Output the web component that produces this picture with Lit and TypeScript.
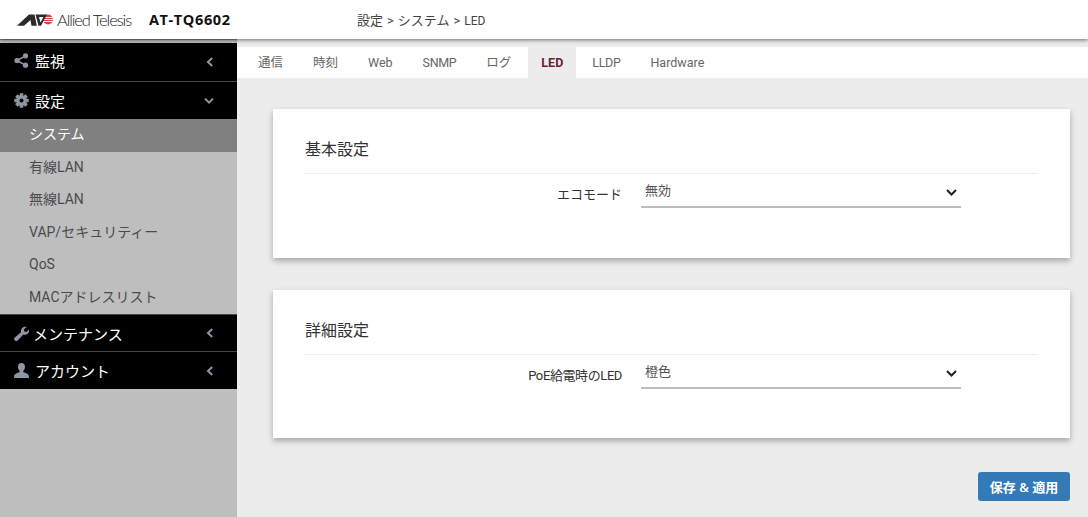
import { LitElement, html, css, svg } from "lit";
import { customElement } from "lit/decorators.js";

const chevLeft = html`<svg class="chev" width="8" height="10" viewBox="0 0 8 10"><path d="M6.200 1 2 5l4.200 4" fill="none" stroke="#8e96a6" stroke-width="2"/></svg>`;
const chevDown = html`<svg class="chev" width="10" height="8" viewBox="0 0 10 8"><path d="M1 1.600 5 5.600l4-4" fill="none" stroke="#8e96a6" stroke-width="2"/></svg>`;
const share = svg`<circle cx="3" cy="7.500" r="2.600"/><circle cx="11.500" cy="2.800" r="2.600"/><circle cx="11.500" cy="12.200" r="2.600"/><path d="M3 7.500 11.500 2.800M3 7.500l8.500 4.700" stroke="#8e96a6" stroke-width="1.500"/>`;
const gearTeeth = [0, 45, 90, 135].map(a => svg`<rect x="5.700" y="0.300" width="3.600" height="14.400" rx=".4" transform="rotate(${a} 7.500 7.500)"/>`);
const gear = svg`${gearTeeth}<circle cx="7.500" cy="7.500" r="5.200"/><circle cx="7.500" cy="7.500" r="2" fill="#000"/>`;
const wrench = svg`<path d="M.8 14.200c-1-1-.9-1.800 0-2.600L7 6.300C6.400 4 7.400 1.300 10.800.7c.8-.1 1.500 0 1.900.2L9.900 3.600l.5 2 2 .5L15 3.400c.3 1.900-.1 3.400-1.300 4.400-1.300 1.100-2.800 1.300-4.300.8l-5.800 5.900c-.9.900-1.800 1-2.800-.3z"/>`;
const user = svg`<path d="M7.500 0C5.300 0 4 1.700 4 3.900c0 1.700.8 3.200 1.800 4 .1.900-.2 1.300-1 1.600C2.600 10.300.5 10.800.2 12.500L0 15h15l-.2-2.500c-.3-1.700-2.400-2.200-4.600-3-.8-.3-1.100-.7-1-1.600 1-.8 1.800-2.300 1.800-4C11 1.700 9.700 0 7.500 0z"/>`;

@customElement("app-root")
export class AppRoot extends LitElement {
  static styles = css`
    :host { display: block; width: 1088px; height: 517px; overflow: hidden; position: relative; background: #ececec;
      font-family: Roboto, "Noto Sans CJK JP", sans-serif; font-size: 13px; color: #555; }
    .top { height: 39px; background: #fff; display: flex; align-items: center; box-shadow: 0 1px 4px rgba(0,0,0,.55); position: relative; z-index: 3; }
    .logo { display: flex; align-items: center; margin-left: 17px; width: 132px; height: 16px; }
    .logo svg { flex: none; }
    .brand { font-family: "Lato", sans-serif; font-weight: 300; font-size: 16.500px; color: #222; letter-spacing: -1.100px; margin-left: 4px; white-space: nowrap; }
    .model { font-family: "Open Sans", sans-serif; font-weight: 700; font-size: 14.500px; color: #111; letter-spacing: .6px; width: 208px; }
    .crumb { font-size: 13px; color: #444; word-spacing: .8px; }
    .crumb span { font-size: 12px; }
    .body { display: flex; height: 478px; }
    .side { width: 237px; background: #bebebe; flex: none; padding-top: 4px; box-shadow: inset 0 1px 0 #888; }
    .head { box-sizing: border-box; height: 37px; padding-bottom: 1px; background: #000; display: flex; align-items: center; color: #fff; font-size: 15px; position: relative; padding-left: 14px; }
    .head.first { height: 39px; padding-bottom: 3px; border-bottom: 1px solid #444; }
    .head.maint { height: 38px; padding-bottom: 0; border-top: 1px solid #444; border-bottom: 1px solid #444; }
    .head svg.ic { width: 15px; height: 15px; fill: #8e96a6; flex: none; margin-right: 6px; }
    .head svg.ic.w { margin-right: 4px; }
    .head .chev { position: absolute; right: 23px; top: 50%; transform: translateY(-50%); }
    .item { height: 32.500px; line-height: 31.500px; padding-left: 29px; font-size: 14px; color: #4b4b4b; }
    .item.on { background: #808080; color: #fff; }
    .main { flex: 1; min-width: 0; padding-top: 8px; position: relative; }
    .tabs { height: 31px; background: #fff; display: flex; padding-left: 6px; }
    .tab { padding: 0 15px; line-height: 31px; font-size: 12.500px; color: #666; }
    .tab.cap { letter-spacing: -.35px; }
    .tab.on { background: #ececec; color: #6b1f33; font-weight: 700; padding: 0 13px; margin: 0 1px 0 2px; letter-spacing: 0; }
    .cards { padding: 31px 18px 0 36px; display: flex; flex-direction: column; gap: 32px; }
    .card { background: #fff; height: 149px; box-shadow: 0 3px 6px rgba(0,0,0,.3); padding: 0 32px; box-sizing: border-box; }
    .card.b { height: 148px; }
    .title { font-size: 16px; color: #333; height: 65px; line-height: 82px; border-bottom: 1px solid #eee; box-sizing: border-box; }
    .row { display: flex; height: 34px; }
    .lab { width: 317px; text-align: right; font-size: 13px; color: #333; line-height: 41px; flex: none; white-space: nowrap; }
    .lab.tight { letter-spacing: -.4px; }
    .sel { width: 320px; margin-left: 19px; height: 34px; border-bottom: 2px solid #bebebe; display: flex; justify-content: space-between; align-items: center; padding: 0 4px; box-sizing: border-box; font-size: 13px; color: #555; }
    .sel span { transform: translateY(-1px); }
    .sel svg { transform: translateY(2.500px); }
    .save { position: absolute; right: 18px; bottom: 16px; width: 92px; height: 29px; border: 0; border-radius: 3px; background: #337ab7; color: #fff; font: 600 13px "Open Sans", "Noto Sans CJK JP", sans-serif; padding: 0; }
  `;

  private selChev() {
    return html`<svg width="11" height="8" viewBox="0 0 11 8"><path d="M1 1.500 5.500 6 10 1.500" fill="none" stroke="#222" stroke-width="2"/></svg>`;
  }

  render() {
    return html`
      <div class="top">
        <div class="logo">
          <svg width="36" height="12" viewBox="0 0 36 12">
            <circle cx="31" cy="5.500" r="5" fill="#d8433a"/>
            <path stroke="#fff" stroke-width=".9" d="M26 3.500h10M26 5.500h10M26 7.500h10"/>
            <path fill="#2a2a2a" d="M0 11.700 12 .5h5.500l2.300 11.200h-5.300L13.500 6 7 11.700z"/>
            <path fill="#2a2a2a" fill-rule="evenodd" d="M18.500.5H30L24 11.700h-2.500zM22 3l1.500 5.500L26.500 3z"/>
          </svg>
          <span class="brand">Allied Telesis</span>
        </div>
        <div class="model">AT-TQ6602</div>
        <div class="crumb">設定 &gt; システム &gt; <span>LED</span></div>
      </div>
      <div class="body">
        <nav class="side">
          <div class="head first"><svg class="ic" viewBox="0 0 15 15">${share}</svg>監視${chevLeft}</div>
          <div class="head"><svg class="ic" viewBox="0 0 15 15">${gear}</svg>設定${chevDown}</div>
          <div class="item on">システム</div>
          <div class="item">有線LAN</div>
          <div class="item">無線LAN</div>
          <div class="item">VAP/セキュリティー</div>
          <div class="item">QoS</div>
          <div class="item">MACアドレスリスト</div>
          <div class="head maint"><svg class="ic w" viewBox="0 0 15 15">${wrench}</svg>メンテナンス${chevLeft}</div>
          <div class="head"><svg class="ic" viewBox="0 0 15 15">${user}</svg>アカウント${chevLeft}</div>
        </nav>
        <main class="main">
          <div class="tabs">
            ${["通信","時刻","Web","SNMP","ログ","LED","LLDP","Hardware"].map(t => html`<div class="tab ${t === "LED" ? "on" : ""} ${t === "SNMP" || t === "LLDP" ? "cap" : ""}">${t}</div>`)}
          </div>
          <div class="cards">
            <section class="card">
              <div class="title">基本設定</div>
              <div class="row"><div class="lab">エコモード</div><div class="sel"><span>無効</span>${this.selChev()}</div></div>
            </section>
            <section class="card b">
              <div class="title">詳細設定</div>
              <div class="row"><div class="lab tight">PoE給電時のLED</div><div class="sel"><span>橙色</span>${this.selChev()}</div></div>
            </section>
          </div>
          <button class="save">保存 &amp; 適用</button>
        </main>
      </div>`;
  }
}
